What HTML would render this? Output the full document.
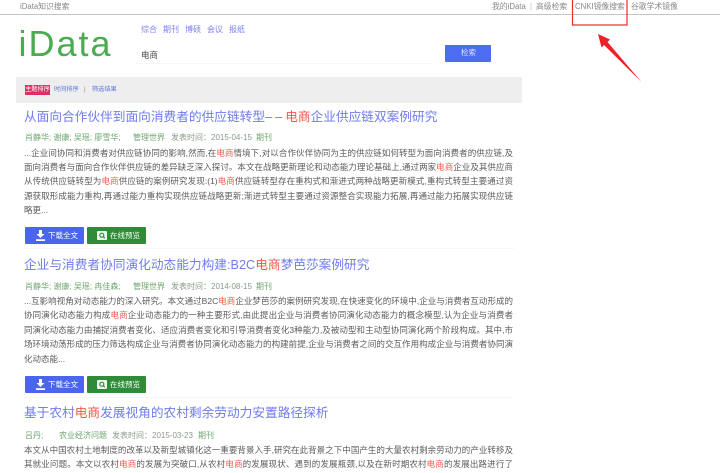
<!DOCTYPE html>
<html lang="zh">
<head>
<meta charset="utf-8">
<title>iData知识搜索</title>
<style>
html,body{margin:0;padding:0;background:#fff}
body{position:relative;width:720px;height:473px;overflow:hidden;font-family:"Liberation Sans","Noto Sans CJK SC",sans-serif}
.t{position:absolute;white-space:nowrap;filter:blur(.3px)}
.top{top:1px;font-size:7.8px;line-height:12px;color:#888}
.j{position:absolute;left:24px;width:489px;height:14px;line-height:14px;font-size:8.5px;color:#5c5c5c;text-align:justify;text-align-last:justify;white-space:normal;overflow:hidden;filter:blur(.3px)}
.j.l{text-align-last:left}
.h{color:#f0584c}
.title{position:absolute;left:24px;height:18px;line-height:18px;font-size:12.7px;color:#6f7cec;white-space:nowrap;filter:blur(.25px)}
.m{position:absolute;height:12px;line-height:12px;font-size:8px;color:#6da66f;white-space:nowrap;filter:blur(.3px)}
.m.g{color:#8a9a8a}
.btn{position:absolute;width:59px;height:17px;border-radius:1px;color:#fff;font-size:7.5px;line-height:17px}
.blue{left:25px;background:#4a66ec}
.green{left:87px;width:59px;background:#2f8b37}
.btn span{position:absolute;left:23px;top:0;white-space:nowrap;filter:blur(.2px)}
.rule{position:absolute;left:24px;width:490px;height:1px;background:#f6f6f6}
</style>
</head>
<body>
<div class="t top" style="left:20px">iData知识搜索</div>
<div class="t top" style="left:492px">我的iData</div>
<div class="t top" style="left:530px;color:#bbb">|</div>
<div class="t top" style="left:536px">高级检索</div>
<div class="t top" style="left:575px">CNKI镜像搜索</div>
<div class="t top" style="left:631px">谷歌学术镜像</div>
<div style="position:absolute;left:0;top:14px;width:720px;height:1px;background:#c4c4c4"></div>

<div class="t" style="left:18.500px;top:23px;font-size:36px;line-height:42px;color:#4bab50;letter-spacing:2px">iData</div>
<div class="t" style="left:141px;top:24px;font-size:8px;line-height:12px;color:#7d80ee">综合</div>
<div class="t" style="left:163px;top:24px;font-size:8px;line-height:12px;color:#7d80ee">期刊</div>
<div class="t" style="left:185px;top:24px;font-size:8px;line-height:12px;color:#7d80ee">博硕</div>
<div class="t" style="left:207px;top:24px;font-size:8px;line-height:12px;color:#7d80ee">会议</div>
<div class="t" style="left:229px;top:24px;font-size:8px;line-height:12px;color:#7d80ee">报纸</div>
<div class="t" style="left:141px;top:49px;font-size:8.5px;line-height:12px;color:#444">电商</div>
<div style="position:absolute;left:136px;top:63px;width:296px;height:1px;background:#f6f6f6"></div>
<div style="position:absolute;left:445px;top:45px;width:46px;height:17px;border-radius:1px;background:#4c6cf2"></div>
<div class="t" style="left:461px;top:47px;font-size:7.5px;line-height:12px;color:#dfe5ff">检索</div>

<div style="position:absolute;left:16px;top:77px;width:506px;height:26px;background:#eee"></div>
<div style="position:absolute;left:25px;top:85px;width:25px;height:10px;background:#dc2f63"></div>
<div class="t" style="left:25px;top:84px;font-size:6.2px;line-height:12px;color:#fff;width:25px;text-align:center">主题排序</div>
<div class="t" style="left:54px;top:84px;font-size:6.2px;line-height:12px;color:#5f78d8">时间排序</div>
<div class="t" style="left:84px;top:84px;font-size:6.2px;line-height:12px;color:#888">|</div>
<div class="t" style="left:92px;top:84px;font-size:6.2px;line-height:12px;color:#5f78d8">筛选结果</div>

<div class="title" style="top:108px">从面向合作伙伴到面向消费者的供应链转型<span style="letter-spacing:3px">––</span><span class="h">电商</span>企业供应链双案例研究</div>
<div class="m" style="left:25px;top:132px">肖静华; 谢康; 吴瑶; 廖雪华;</div>
<div class="m" style="left:133px;top:132px">管理世界</div>
<div class="m g" style="left:171px;top:132px">发表时间：2015-04-15</div>
<div class="m" style="left:256px;top:132px">期刊</div>
<div class="j" style="top:146px">...企业间协同和消费者对供应链协同的影响,然而,在<span class="h">电商</span>情境下,对以合作伙伴协同为主的供应链如何转型为面向消费者的供应链,及</div>
<div class="j" style="top:160px">面向消费者与面向合作伙伴供应链的差异缺乏深入探讨。本文在战略更新理论和动态能力理论基础上,通过两家<span class="h">电商</span>企业及其供应商</div>
<div class="j" style="top:174px">从传统供应链转型为<span class="h">电商</span>供应链的案例研究发现:(1)<span class="h">电商</span>供应链转型存在重构式和渐进式两种战略更新模式,重构式转型主要通过资</div>
<div class="j" style="top:189px">源获取形成能力重构,再通过能力重构实现供应链战略更新;渐进式转型主要通过资源整合实现能力拓展,再通过能力拓展实现供应链战</div>
<div class="j l" style="top:203px">略更...</div>

<div class="btn blue" style="top:227px"><svg width="11" height="11" viewBox="0 0 11 11" style="position:absolute;left:10px;top:3px"><path d="M4 0h3v4h2.500L5.500 8 1.500 4H4z M1 9.300h9V11H1z" fill="#fff"/></svg><span>下载全文</span></div>
<div class="btn green" style="top:227px"><svg width="10" height="9" viewBox="0 0 10 9" style="position:absolute;left:10px;top:4px"><rect width="10" height="9" rx="1" fill="#eef5ee"/><circle cx="4.800" cy="4.200" r="2" fill="none" stroke="#2f8b37" stroke-width="1.200"/><path d="M6.200 5.600L7.800 7.200" stroke="#2f8b37" stroke-width="1.200"/></svg><span>在线预览</span></div>
<div class="rule" style="top:248px"></div>

<div class="title" style="top:256px">企业与消费者协同演化动态能力构建:B2C<span class="h">电商</span>梦芭莎案例研究</div>
<div class="m" style="left:25px;top:281px">肖静华; 谢康; 吴瑶; 冉佳森;</div>
<div class="m" style="left:133px;top:281px">管理世界</div>
<div class="m g" style="left:171px;top:281px">发表时间：2014-08-15</div>
<div class="m" style="left:256px;top:281px">期刊</div>
<div class="j" style="top:294px">...互影响视角对动态能力的深入研究。本文通过B2C<span class="h">电商</span>企业梦芭莎的案例研究发现,在快速变化的环境中,企业与消费者互动形成的</div>
<div class="j" style="top:308px">协同演化动态能力构成<span class="h">电商</span>企业动态能力的一种主要形式,由此提出企业与消费者协同演化动态能力的概念模型,认为企业与消费者协</div>
<div class="j" style="top:323px">同演化动态能力由捕捉消费者变化、适应消费者变化和引导消费者变化3种能力,及被动型和主动型协同演化两个阶段构成。其中,市</div>
<div class="j" style="top:337px">场环境动荡形成的压力筛选构成企业与消费者协同演化动态能力的构建前提,企业与消费者之间的交互作用构成企业与消费者协同演</div>
<div class="j l" style="top:352px">化动态能...</div>

<div class="btn blue" style="top:376px"><svg width="11" height="11" viewBox="0 0 11 11" style="position:absolute;left:10px;top:3px"><path d="M4 0h3v4h2.500L5.500 8 1.500 4H4z M1 9.300h9V11H1z" fill="#fff"/></svg><span>下载全文</span></div>
<div class="btn green" style="top:376px"><svg width="10" height="9" viewBox="0 0 10 9" style="position:absolute;left:10px;top:4px"><rect width="10" height="9" rx="1" fill="#eef5ee"/><circle cx="4.800" cy="4.200" r="2" fill="none" stroke="#2f8b37" stroke-width="1.200"/><path d="M6.200 5.600L7.800 7.200" stroke="#2f8b37" stroke-width="1.200"/></svg><span>在线预览</span></div>
<div class="rule" style="top:397px"></div>

<div class="title" style="top:404px">基于农村<span class="h">电商</span>发展视角的农村剩余劳动力安置路径探析</div>
<div class="m" style="left:25px;top:430px">吕丹;</div>
<div class="m" style="left:59px;top:430px">农业经济问题</div>
<div class="m g" style="left:112px;top:430px">发表时间：2015-03-23</div>
<div class="m" style="left:198px;top:430px">期刊</div>
<div class="j" style="top:443px">本文从中国农村土地制度的改革以及新型城镇化这一重要背景入手,研究在此背景之下中国产生的大量农村剩余劳动力的产业转移及</div>
<div class="j" style="top:457px">其就业问题。本文以农村<span class="h">电商</span>的发展为突破口,从农村<span class="h">电商</span>的发展现状、遇到的发展瓶颈,以及在新时期农村<span class="h">电商</span>的发展出路进行了比</div>

<svg width="720" height="473" viewBox="0 0 720 473" style="position:absolute;left:0;top:0;pointer-events:none">
<rect x="572.500" y="-2" width="54.500" height="27" fill="none" stroke="#f0282d" stroke-width="1.200"/>
<path d="M598 34L610 39.500 607.500 42 641.500 82 604 45 601.500 47.500Z" fill="#ee2028"/>
</svg>
</body>
</html>
